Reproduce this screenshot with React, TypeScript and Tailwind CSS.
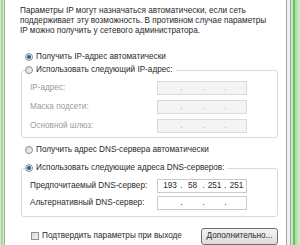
import React from "react";

function Radio({ checked }: { checked?: boolean }) {
  return (
    <span className="relative w-[8px] h-[8px] rounded-full border border-[#8c8f91] bg-gradient-to-br from-[#d4d6d8] to-[#f7f7f7] flex items-center justify-center shrink-0">
      {checked && <span className="w-[4px] h-[4px] rounded-full bg-[#2b5d8e]" />}
    </span>
  );
}

function IpField({ values, disabled }: { values?: string[]; disabled?: boolean }) {
  const v = values ?? ["", "", "", ""];
  const widths = ["w-[20px]", "w-[19px]", "w-[19px]", "w-[19px]"];
  return (
    <div
      className={`w-[90px] h-[14px] border flex items-center pl-[2px] ${
        disabled ? "bg-[#f4f4f4] border-[#dadada] text-[#a8a8a8]" : "bg-white border-[#c8cacc] text-[#2a2a2a]"
      }`}
    >
      {v.map((s, i) => (
        <React.Fragment key={i}>
          <span className={`${widths[i]} text-center leading-[12px]`}>{s}</span>
          {i < 3 && <span className="w-[3px] text-center leading-[12px]">.</span>}
        </React.Fragment>
      ))}
    </div>
  );
}

export default function App() {
  return (
    <div className="w-[300px] h-[245px] flex overflow-hidden text-[8.2px] text-[#2a2a2a] font-['Liberation_Sans',sans-serif]">
      {/* left green edge */}
      <div className="w-[4px] flex">
        <div className="w-[1px] bg-[#cfeac8]" />
        <div className="w-[2px] bg-[#a9d89d]" />
        <div className="w-[1px] bg-[#d6eed0]" />
      </div>
      <div className="w-[1px] bg-[#a3a8a8]" />

      {/* white content */}
      <div className="w-[281px] bg-white flex flex-col">
        <p className="mt-[6px] ml-[15px] leading-[10px] whitespace-nowrap">
          Параметры IP могут назначаться автоматически, если сеть
          <br />
          поддерживает эту возможность. В противном случае параметры
          <br />
          IP можно получить у сетевого администратора.
        </p>

        <div className="mt-[16px] ml-[20px] h-[10px] flex items-center gap-[3px] whitespace-nowrap">
          <Radio checked />
          <span>Получить IP-адрес автоматически</span>
        </div>

        <div className="mt-[8px] ml-[16px] mr-[8px] h-[69px] border border-[#d5dde3] rounded-[3px] flex flex-col">
          <div className="-mt-[6px] ml-[3px] h-[10px] w-fit bg-white pr-[3px] flex items-center gap-[3px] whitespace-nowrap">
            <Radio />
            <span>Использовать следующий IP-адрес:</span>
          </div>
          <div className="mt-[6px] flex items-center h-[14px]">
            <span className="w-[135px] pl-[8px] text-[#9a9a9a]">IP-адрес:</span>
            <IpField disabled />
          </div>
          <div className="mt-[5px] flex items-center h-[14px]">
            <span className="w-[135px] pl-[8px] text-[#9a9a9a]">Маска подсети:</span>
            <IpField disabled />
          </div>
          <div className="mt-[5px] flex items-center h-[14px]">
            <span className="w-[135px] pl-[8px] text-[#9a9a9a]">Основной шлюз:</span>
            <IpField disabled />
          </div>
        </div>

        <div className="mt-[7px] ml-[20px] h-[10px] flex items-center gap-[3px] whitespace-nowrap">
          <Radio />
          <span>Получить адрес DNS-сервера автоматически</span>
        </div>

        <div className="mt-[13px] ml-[16px] mr-[8px] h-[49px] border border-[#d5dde3] rounded-[3px] flex flex-col">
          <div className="-mt-[6px] ml-[3px] h-[10px] w-fit bg-white pr-[3px] flex items-center gap-[3px] whitespace-nowrap">
            <Radio checked />
            <span>Использовать следующие адреса DNS-серверов:</span>
          </div>
          <div className="mt-[6px] flex items-center h-[14px]">
            <span className="w-[135px] pl-[8px]">Предпочитаемый DNS-сервер:</span>
            <IpField values={["193", "58", "251", "251"]} />
          </div>
          <div className="mt-[3px] flex items-center h-[14px]">
            <span className="w-[135px] pl-[8px]">Альтернативный DNS-сервер:</span>
            <IpField />
          </div>
        </div>

        <div className="mt-[11px] ml-[26px] mr-[8px] h-[17px] flex items-center justify-between">
          <div className="flex items-center gap-[3px] whitespace-nowrap">
            <span className="w-[8px] h-[8px] border border-[#8f9294] bg-gradient-to-br from-[#d8dadb] to-[#f6f6f6]" />
            <span>Подтвердить параметры при выходе</span>
          </div>
          <div className="w-[77px] h-[17px] shrink-0 rounded-[3px] border border-[#707070] bg-gradient-to-b from-[#f3f3f3] to-[#dcdcdc] flex items-center justify-center whitespace-nowrap">
            Дополнительно...
          </div>
        </div>
      </div>

      {/* right edge */}
      <div className="w-[1px] bg-[#a0a4a6]" />
      <div className="w-[3px] bg-[#eef0f1]" />
      <div className="w-[1px] bg-[#9da3a3]" />
      <div className="w-[9px] flex">
        <div className="w-[2px] bg-[#c8e8c0]" />
        <div className="w-[2px] bg-[#6dbf5f]" />
        <div className="w-[5px] bg-gradient-to-r from-[#a6d99a] to-[#d4efcd]" />
      </div>
    </div>
  );
}
